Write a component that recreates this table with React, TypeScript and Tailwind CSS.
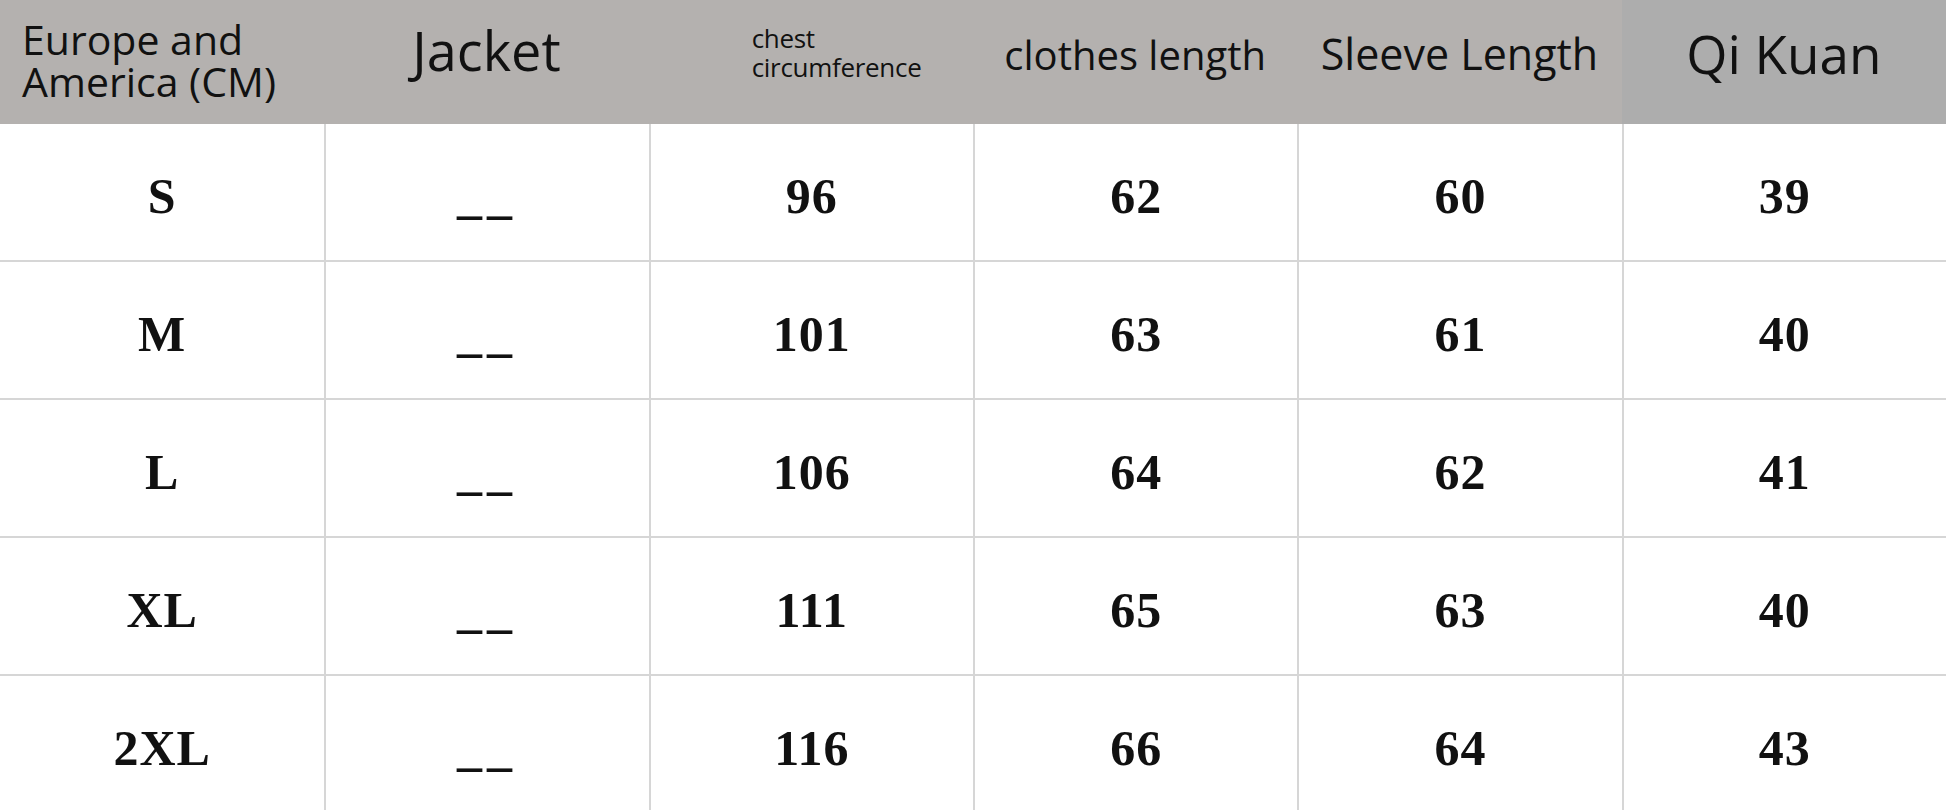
const rows = [
  { size: 'S', chest: '96', length: '62', sleeve: '60', qi: '39' },
  { size: 'M', chest: '101', length: '63', sleeve: '61', qi: '40' },
  { size: 'L', chest: '106', length: '64', sleeve: '62', qi: '41' },
  { size: 'XL', chest: '111', length: '65', sleeve: '63', qi: '40' },
  { size: '2XL', chest: '116', length: '66', sleeve: '64', qi: '43' },
];

const Cell = ({ value, first, dash }: { value: string; first?: boolean; dash?: boolean }) => (
  <div
    className={`flex h-[138px] items-center justify-center border-b-2 border-[#d6d6d6] pt-[8px] ${
      first ? '' : 'border-l-2'
    }`}
  >
    <span
      className={`font-['Liberation_Serif',serif] text-[50px] font-bold text-[#111] ${
        dash ? 'tracking-[5px] pr-[1px]' : 'tracking-[1px]'
      }`}
    >
      {value}
    </span>
  </div>
);

export default function App() {
  return (
    <div className="h-[810px] w-[1946px] overflow-hidden bg-white font-['Open_Sans','Noto_Sans',sans-serif] text-[#111]">
      <div className="grid grid-cols-6">
        {/* header */}
        <div className="flex h-[124px] flex-col bg-[#b4b1af] pl-[22px] pt-[18px] text-[41px] leading-[42px]">
          <div>Europe and</div>
          <div>America (CM)</div>
        </div>
        <div className="flex h-[124px] justify-center bg-[#b4b1af] pt-[10px] text-[54px]">Jacket</div>
        <div className="flex h-[124px] flex-col bg-[#b4b1af] pl-[103px] pt-[24px] text-[26px] leading-[29px] tracking-[-0.3px]">
          <div>chest</div>
          <div>circumference</div>
        </div>
        <div className="flex h-[124px] justify-center bg-[#b4b1af] pt-[25px] text-[40px]">clothes length</div>
        <div className="flex h-[124px] justify-center bg-[#b4b1af] pt-[22px] text-[43px]">Sleeve Length</div>
        <div className="flex h-[124px] justify-center bg-[#adadad] pt-[14px] text-[53px]">Qi Kuan</div>

        {rows.map((r) => (
          <div key={r.size} className="contents">
            <Cell value={r.size} first />
            <Cell value="__" dash />
            <Cell value={r.chest} />
            <Cell value={r.length} />
            <Cell value={r.sleeve} />
            <Cell value={r.qi} />
          </div>
        ))}
      </div>
    </div>
  );
}
